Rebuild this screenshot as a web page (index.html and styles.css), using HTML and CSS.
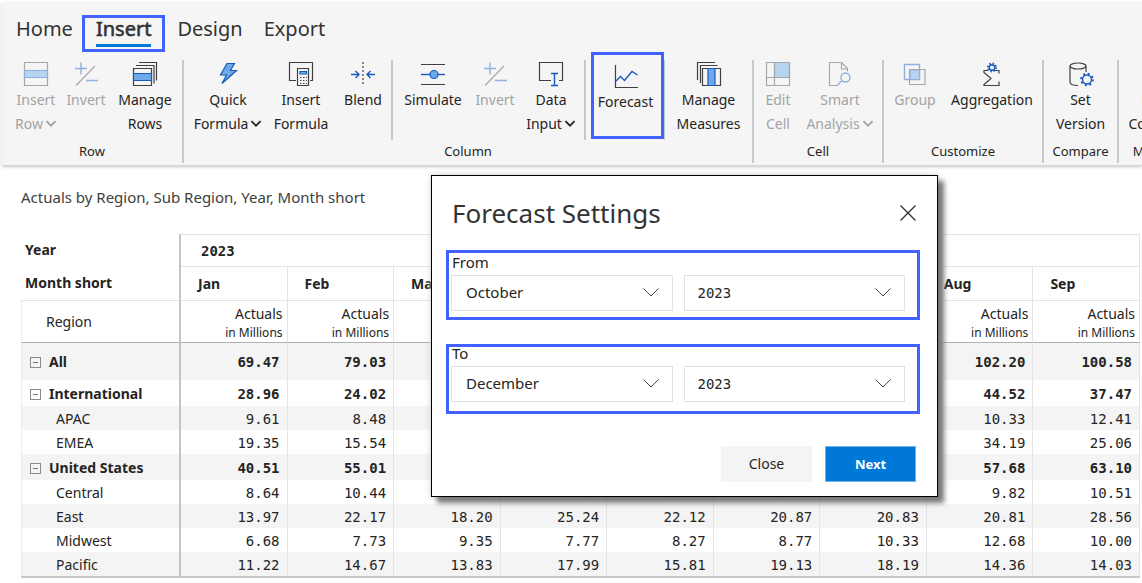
FILE: index.html
```html
<!DOCTYPE html>
<html lang="en">
<head>
<meta charset="utf-8">
<title>Forecast Settings</title>
<link rel="stylesheet" href="styles.css">
</head>
<body>
<header class="ribbon">
  <nav class="tabs">
    <a class="tab" href="#home">Home</a>
    <a class="tab tab-active" href="#insert"><span class="tab-text">Insert</span></a>
    <a class="tab" href="#design">Design</a>
    <a class="tab" href="#export">Export</a>
  </nav>
  <div class="groups">
    <section class="group">
      <div class="tools tools-row">
        <button class="tool" disabled>
          <svg class="icon" viewBox="0 0 24 24"><path class="ln" d="M.5.5h23v23H.5z"/><path class="fill" d="M.5 8.500h23v7H.5z"/></svg>
          <span>Insert</span><span>Row<svg class="caret" viewBox="0 0 10 7"><path d="M1 1l4 4 4-4"/></svg></span>
        </button>
        <button class="tool" disabled>
          <svg class="icon" viewBox="0 0 24 24"><path class="ln" d="M2 23.500L21 4"/><path class="bl" d="M1 6.500h12M7 .5v12M12 18.500h12"/></svg>
          <span>Invert</span>
        </button>
        <button class="tool">
          <svg class="icon" viewBox="0 0 24 24"><path class="ln" d="M6 .5h17.500v18M3 3.500h18v18M.5 6.500h18v17H.5z"/><path class="fill" d="M.5 11.500h18v7H.5z"/></svg>
          <span>Manage</span><span>Rows</span>
        </button>
      </div>
      <h2 class="group-name">Row</h2>
    </section>

    <section class="group">
      <div class="sections">
        <div class="tools tools-formula">
          <button class="tool">
            <svg class="icon" viewBox="0 0 24 24"><path class="fill" d="M11 1.500h7.500l-4 7H20.500L6 21.500l4.500-8.500H4.500z"/></svg>
            <span>Quick</span><span>Formula<svg class="caret" viewBox="0 0 10 7"><path d="M1 1l4 4 4-4"/></svg></span>
          </button>
          <button class="tool">
            <svg class="icon" viewBox="0 0 24 24"><path class="ln" d="M7 18.500H.5V.5h23v18H21M8.500 6.500h11v17h-11z"/><path class="fill" d="M11 9.500h6.500v2.500H11z"/><path class="ln dots" d="M11 15.500h7M11 18.500h7M11 21.500h7"/></svg>
            <span>Insert</span><span>Formula</span>
          </button>
          <button class="tool">
            <svg class="icon" viewBox="0 0 24 24"><path class="ln dash" d="M12 0v24"/><path class="bl" d="M0 12.500h8M4.500 9L8 12.500 4.500 16M24 12.500h-8M19.500 9L16 12.500l3.500 3.500"/></svg>
            <span>Blend</span>
          </button>
        </div>
        <div class="tools tools-input">
          <button class="tool">
            <svg class="icon" viewBox="0 0 24 24"><path class="ln" d="M0 2.500h24M0 22.500h24"/><path class="bl" d="M0 12.500h24"/><circle class="fill" cx="13" cy="12.500" r="4"/></svg>
            <span>Simulate</span>
          </button>
          <button class="tool" disabled>
            <svg class="icon" viewBox="0 0 24 24"><path class="ln" d="M2 23.500L21 4"/><path class="bl" d="M1 6.500h12M7 .5v12M12 18.500h12"/></svg>
            <span>Invert</span>
          </button>
          <button class="tool">
            <svg class="icon" viewBox="0 0 24 24"><path class="ln" d="M12 18.500H.5V.5h23v18H20"/><path class="bl" d="M12 11.500h7M15.500 11.500v12M12 23.500h7"/></svg>
            <span>Data</span><span>Input<svg class="caret" viewBox="0 0 10 7"><path d="M1 1l4 4 4-4"/></svg></span>
          </button>
        </div>
        <div class="tools tools-forecast">
          <button class="tool tool-marked">
            <svg class="icon" viewBox="0 0 24 24"><path class="ln" d="M1.500 1v22.500H24"/><path class="bl" d="M2 17l4.500-4.500 4 4L18 7.500l5.500 3.500"/></svg>
            <span>Forecast</span>
          </button>
        </div>
        <div class="tools tools-measures">
          <button class="tool">
            <svg class="icon" viewBox="0 0 24 24"><path class="ln" d="M18 .5H.5V18M20.500 3.500h-17V21M5.500 6.500h18v17h-18z"/><path class="fill" d="M11 6.500h7v17h-7z"/></svg>
            <span>Manage</span><span>Measures</span>
          </button>
        </div>
      </div>
      <h2 class="group-name">Column</h2>
    </section>

    <section class="group">
      <div class="tools tools-cell">
        <button class="tool" disabled>
          <svg class="icon" viewBox="0 0 24 24"><path class="fill" d="M8.500.5h15v15h-15z"/><path class="ln" d="M.5.5h23v23H.5zM8.500.5v23M.5 15.500h23"/></svg>
          <span>Edit</span><span>Cell</span>
        </button>
        <button class="tool" disabled>
          <svg class="icon" viewBox="0 0 24 24"><path class="ln" d="M9 23.500H1.500V.5h12l6 6v3M13.500.5V7h6"/><circle class="bl" cx="17.500" cy="15.500" r="4.500"/><path class="bl" d="M14 18.500L8.500 24"/></svg>
          <span>Smart</span><span>Analysis<svg class="caret" viewBox="0 0 10 7"><path d="M1 1l4 4 4-4"/></svg></span>
        </button>
      </div>
      <h2 class="group-name">Cell</h2>
    </section>

    <section class="group">
      <div class="tools tools-customize">
        <button class="tool" disabled>
          <svg class="icon" viewBox="0 0 24 24"><path class="bl" d="M1.500 2.500h15v15h-15z"/><path class="fill" d="M7 8h9.500v9.500H7z"/><path class="ln" d="M6.500 7.500h15.500v15H6.500z"/></svg>
          <span>Group</span>
        </button>
        <button class="tool">
          <svg class="icon" viewBox="0 0 24 24"><path class="ln" d="M8 8.500H4v2l7 6-7 6v1h15v-4M15 8.500h4v3"/><circle class="bl" cx="12" cy="5.500" r="2.800"/><circle class="gear" cx="12" cy="5.500" r="4" stroke-dasharray="1.500 1.640"/></svg>
          <span>Aggregation</span>
        </button>
      </div>
      <h2 class="group-name">Customize</h2>
    </section>

    <section class="group">
      <div class="tools tools-compare">
        <button class="tool">
          <svg class="icon" viewBox="0 0 24 24"><ellipse class="ln" cx="9" cy="4" rx="8" ry="3"/><path class="ln" d="M1 4v16c0 2 3 3.500 8 3.500M17 4v6"/><circle class="bl" cx="18" cy="17.500" r="4.500"/><circle class="gear" cx="18" cy="17.500" r="5.800" stroke-dasharray="2 2.550"/></svg>
          <span>Set</span><span>Version</span>
        </button>
      </div>
      <h2 class="group-name">Compare</h2>
    </section>

    <section class="group">
      <div class="tools tools-manage">
        <button class="tool"><span class="icon"></span><span>Filter</span><span>Columns</span></button>
      </div>
      <h2 class="group-name">Manage</h2>
    </section>
  </div>
</header>

<main class="report">
  <p class="caption">Actuals by Region, Sub Region, Year, Month short</p>
  <table class="matrix">
    <colgroup><col class="col-name"><col span="9"></colgroup>
    <thead>
      <tr class="r-year"><th>Year</th><th colspan="9" class="num-head">2023</th></tr>
      <tr class="r-month"><th>Month short</th><th>Jan</th><th>Feb</th><th>Mar</th><th></th><th></th><th></th><th></th><th>Aug</th><th>Sep</th></tr>
      <tr class="r-measure"><th>Region</th><td>Actuals<small>in Millions</small></td><td>Actuals<small>in Millions</small></td><td></td><td></td><td></td><td></td><td></td><td>Actuals<small>in Millions</small></td><td>Actuals<small>in Millions</small></td></tr>
    </thead>
    <tbody>
      <tr class="total grand shade"><th><button class="toggle" aria-label="Collapse All"></button>All</th><td>69.47</td><td>79.03</td><td></td><td></td><td></td><td></td><td></td><td>102.20</td><td>100.58</td></tr>
      <tr class="total"><th><button class="toggle" aria-label="Collapse International"></button>International</th><td>28.96</td><td>24.02</td><td></td><td></td><td></td><td></td><td></td><td>44.52</td><td>37.47</td></tr>
      <tr class="shade"><th>APAC</th><td>9.61</td><td>8.48</td><td></td><td></td><td></td><td></td><td></td><td>10.33</td><td>12.41</td></tr>
      <tr><th>EMEA</th><td>19.35</td><td>15.54</td><td></td><td></td><td></td><td></td><td></td><td>34.19</td><td>25.06</td></tr>
      <tr class="total shade"><th><button class="toggle" aria-label="Collapse United States"></button>United States</th><td>40.51</td><td>55.01</td><td></td><td></td><td></td><td></td><td></td><td>57.68</td><td>63.10</td></tr>
      <tr><th>Central</th><td>8.64</td><td>10.44</td><td>8.85</td><td>7.28</td><td>12.46</td><td>10.66</td><td>9.43</td><td>9.82</td><td>10.51</td></tr>
      <tr class="shade"><th>East</th><td>13.97</td><td>22.17</td><td>18.20</td><td>25.24</td><td>22.12</td><td>20.87</td><td>20.83</td><td>20.81</td><td>28.56</td></tr>
      <tr><th>Midwest</th><td>6.68</td><td>7.73</td><td>9.35</td><td>7.77</td><td>8.27</td><td>8.77</td><td>10.33</td><td>12.68</td><td>10.00</td></tr>
      <tr class="shade"><th>Pacific</th><td>11.22</td><td>14.67</td><td>13.83</td><td>17.99</td><td>15.81</td><td>19.13</td><td>18.19</td><td>14.36</td><td>14.03</td></tr>
    </tbody>
  </table>
</main>

<div class="dialog" role="dialog" aria-labelledby="dialog-title">
  <div class="dialog-head">
    <h1 class="dialog-title" id="dialog-title">Forecast Settings</h1>
    <button class="dismiss" aria-label="Dismiss"><svg viewBox="0 0 16 16"><path d="M.5.5l15 15M15.500.5l-15 15"/></svg></button>
  </div>
  <div class="period">
    <label class="period-label" for="from-month">From</label>
    <div class="pickers">
      <div class="picker"><select id="from-month"><option>October</option></select><svg viewBox="0 0 16 9"><path d="M.5.5L8 8 15.500.5"/></svg></div>
      <div class="picker"><select class="year" aria-label="From year"><option>2023</option></select><svg viewBox="0 0 16 9"><path d="M.5.5L8 8 15.500.5"/></svg></div>
    </div>
  </div>
  <div class="period period-to">
    <label class="period-label" for="to-month">To</label>
    <div class="pickers">
      <div class="picker"><select id="to-month"><option>December</option></select><svg viewBox="0 0 16 9"><path d="M.5.5L8 8 15.500.5"/></svg></div>
      <div class="picker"><select class="year" aria-label="To year"><option>2023</option></select><svg viewBox="0 0 16 9"><path d="M.5.5L8 8 15.500.5"/></svg></div>
    </div>
  </div>
  <div class="actions">
    <button class="btn">Close</button>
    <button class="btn btn-primary">Next</button>
  </div>
</div>
</body>
</html>
```
FILE: styles.css
```css
* { box-sizing: border-box; }
body {
  margin: 0;
  padding: 2px 0 0 2px;
  overflow: hidden;
  background: #fff;
  color: #252423;
  font: 14px/24px "Noto Sans", sans-serif;
}
button, select { font: inherit; color: inherit; margin: 0; }
button { border: 0; background: none; padding: 0; }
h1, h2, p { margin: 0; font-weight: 400; }

.ribbon {
  overflow: hidden;
  background: #f5f5f5;
  border-bottom: 1px solid #d4d4d4;
  box-shadow: 0 1px 3px #c8c8c8;
  padding-bottom: 2px;
}
.tabs { display: flex; align-items: flex-start; padding: 13px 14px 0; }
.tab { color: #333; font-size: 20px; line-height: 27px; text-decoration: none; margin-right: 21px; }
.tab-active { border: 3px solid #4262ff; height: 37px; padding: 0 11px; margin: 0 12px 0 -12px; -webkit-text-stroke: 0.600px #333; }
.tab-text { display: block; height: 29px; line-height: 21px; border-bottom: 3px solid #0078d7; }

.groups { display: flex; padding-top: 8px; }
.group { flex: none; border-right: 2px solid #c8c8c8; height: 103px; }
.group:last-child { border: 0; }
.sections { display: flex; }
.tools { display: grid; height: 80px; align-items: start; }
.sections .tools { border-right: 2px solid #c8c8c8; }
.sections .tools:last-child { border: 0; }
.tools-row { grid-template-columns: 52px 48px 70px; padding: 0 2px 0 8px; }
.tools-formula { grid-template-columns: 76px 70px 54px; padding: 0 1px 0 6px; }
.tools-input { grid-template-columns: 72px 52px 60px; padding: 0 3px 0 4px; }
.sections .tools-forecast { grid-template-columns: 73px; padding-left: 5px; border-right-width: 1px; }
.tools-measures { grid-template-columns: 87px; }
.tools-cell { grid-template-columns: 48px 76px; padding-right: 4px; }
.tools-customize { grid-template-columns: 62px 92px; padding-right: 4px; }
.tools-compare { grid-template-columns: 73px; }
.tools-manage { grid-template-columns: 77px; }
.tool { display: flex; flex-direction: column; align-items: center; padding-top: 2px; white-space: nowrap; }
.tool:disabled { color: #a3a3a3; }
.tool-marked { border: 3px solid #4262ff; height: 87px; margin-top: -8px; padding: 9px 4px 0 0; }
.group-name { height: 23px; line-height: 23px; font-size: 13px; text-align: center; }
.icon { width: 24px; height: 24px; margin-bottom: 2px; fill: none; overflow: visible; }
.ln { stroke: #404040; stroke-width: 1.200; }
.bl { stroke: #185abd; stroke-width: 1.400; }
.gear { stroke: #185abd; stroke-width: 2; }
.fill { fill: #6eaaea; stroke: #185abd; stroke-width: 1.200; }
.dots { stroke-dasharray: 1.500 1.500; }
.dash { stroke-dasharray: 2 2; }
.tool:disabled .ln { stroke: #a8a8a8; }
.tool:disabled .bl { stroke: #8fb0de; }
.tool:disabled .fill { fill: #b5d4f0; stroke: #8fb0de; }
.caret { width: 12px; height: 8px; margin: 0 0 1px 2px; fill: none; stroke: currentColor; stroke-width: 1.600; }

.report { padding: 19px 2px 0 19px; }
.caption { color: #404040; font-size: 15px; }
.matrix { width: 100%; margin-top: 25px; table-layout: fixed; border-collapse: separate; border-spacing: 0; border-bottom: 2px solid #c8c8c8; }
.col-name { width: 160px; }
.matrix th, .matrix td { padding: 0 7px 0 0; line-height: 20px; border-right: 1px solid #e4e4e4; }
.matrix th { text-align: left; font-weight: 400; }
.matrix tr > :first-child { border-right: 2px solid #c4c4c4; border-left: 1px solid #ececec; }
.matrix td { text-align: right; font-family: "DejaVu Sans Mono", monospace; }
.matrix tbody tr { height: 24px; }
.matrix tbody td { padding-top: 1px; }
.matrix tbody th { padding: 1px 0 0 34px; }
.matrix tbody .total { height: 26px; }
.matrix tbody .total > * { font-weight: 700; }
.matrix tbody .total th { padding-left: 8px; }
.matrix tbody .grand { height: 37px; }
.shade { background: #f4f4f4; }
.r-year th, .r-month th { font-weight: 700; }
.matrix .r-year > :first-child, .matrix .r-month > :first-child { padding-left: 3px; border-left-color: transparent; }
.r-year { height: 32px; }
.matrix .num-head { padding-left: 20px; font-family: "DejaVu Sans Mono", monospace; border-top: 1px solid #e4e4e4; }
.r-month { height: 34px; }
.matrix .r-month th + th { border-top: 1px solid #e4e4e4; padding-left: 17px; }
.r-measure { height: 43px; }
.matrix .r-measure > * { border-top: 1px solid #e4e4e4; border-bottom: 1px solid #b0b0b0; }
.matrix .r-measure th { padding: 1px 0 0 24px; }
.matrix .r-measure td { padding: 2px 4px 0 0; font-family: "Noto Sans", sans-serif; }
.r-measure small { display: block; font-size: 12px; line-height: 18px; }
.toggle { display: inline-flex; width: 11px; height: 11px; border: 1px solid #8a8a8a; margin-right: 8px; align-items: center; justify-content: center; vertical-align: 4px; }
.toggle::before { content: ""; width: 5px; height: 1px; background: #777; }

.dialog {
  position: absolute;
  left: 431px;
  top: 175px;
  width: 507px;
  padding: 14px 17px 14px 14px;
  background: #fff;
  border: 1px solid #000;
  box-shadow: 6px 6px 5px #777, 0 0 6px #ccc;
}
.dialog-head { display: flex; justify-content: space-between; align-items: center; height: 46px; margin-bottom: 14px; padding: 0 4px 0 6px; }
.dialog-title { font-size: 26px; line-height: 36px; color: #333; }
.dismiss { width: 16px; height: 16px; display: flex; }
.dismiss svg { width: 16px; fill: none; stroke: #333; stroke-width: 1.400; }
.period { border: 3px solid #4262ff; padding: 0 12px 6px 2px; font-size: 15px; }
.period-label { display: block; height: 22px; line-height: 18px; padding-left: 1px; }
.period-to { margin-top: 24px; padding-bottom: 9px; }
.period-to .period-label { height: 19px; line-height: 12px; }
.pickers { display: grid; grid-template-columns: 1fr 1fr; gap: 11px; }
.picker { display: grid; align-items: center; }
.picker > * { grid-area: 1 / 1; }
.picker select { width: 100%; height: 36px; appearance: none; background: #fff; border: 1px solid #e1e1e1; border-radius: 0; padding: 0 14px 2px; }
.picker .year { font-family: "DejaVu Sans Mono", monospace; font-size: 14px; padding: 0 13px; }
.picker svg { width: 16px; height: 9px; justify-self: end; margin: 0 14px 2px 0; fill: none; stroke: #444; pointer-events: none; }
.actions { display: flex; justify-content: flex-end; gap: 13px; padding: 32px 4px 0 0; }
.btn { width: 91px; height: 36px; background: #f4f4f4; }
.btn-primary { background: #0078d7; color: #fff; font-size: 13px; font-weight: 700; border: 1px solid #71b5ee; }
```
